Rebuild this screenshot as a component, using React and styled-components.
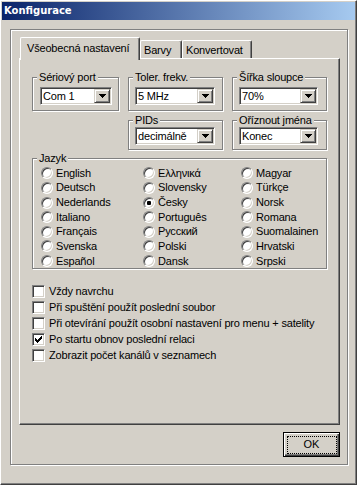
import React from 'react';
import styled, { createGlobalStyle } from 'styled-components';

const Global = createGlobalStyle`
  html, body { margin: 0; padding: 0; background: #D4D0C8; }
  * { box-sizing: border-box; }
`;

const Window = styled.div`
  width: 357px;
  height: 485px;
  background: #D4D0C8;
  border: 1px solid;
  border-color: #ffffff #404040 #404040 #ffffff;
  box-shadow: inset -1px -1px #808080;
  padding: 1px;
  display: flex;
  flex-direction: column;
  font-family: "Liberation Sans", Arial, sans-serif;
  font-size: 11px;
  letter-spacing: -0.18px;
  color: #000;
`;

const TitleBar = styled.div`
  height: 18px;
  display: flex;
  align-items: center;
  padding: 0 0 1px 2px;
  background: linear-gradient(to right, #0A246A, #A6CAF0);
  color: #fff;
  font-family: "DejaVu Sans", Verdana, sans-serif;
  font-weight: bold;
  font-size: 10px;
  letter-spacing: 0;
`;

const Frame = styled.div`
  margin: 9px 0 0 8px;
  width: 338px;
  height: 436px;
  border: 1px solid #808080;
  box-shadow: inset 1px 1px #fff, 1px 1px #fff;
  padding: 7px 0 0 8px;
  display: flex;
  flex-direction: column;
`;

const TabStrip = styled.div`
  height: 21px;
  display: flex;
  align-items: flex-start;
  padding-left: 1px;
  position: relative;
  z-index: 1;
`;

const Tab = styled.div`
  width: ${p => p.$w}px;
  height: ${p => (p.$active ? 23 : 18)}px;
  margin-top: ${p => (p.$active ? 0 : 3)}px;
  background: #D4D0C8;
  border-left: 1px solid #fff;
  border-top: 1px solid #fff;
  border-right: 1px solid #404040;
  box-shadow: inset -1px 0 #808080;
  border-top-left-radius: 2px;
  border-top-right-radius: 2px;
  padding: ${p => (p.$active ? '4px 0 0 6px' : '3px 0 0 3px')};
  line-height: 13px;
  white-space: nowrap;
`;

const Panel = styled.div`
  width: 321px;
  height: 367px;
  border: 1px solid;
  border-color: #fff #404040 #404040 #fff;
  box-shadow: inset -1px -1px #808080;
  padding: 18px 0 0 12px;
  display: flex;
  flex-direction: column;
`;

const GroupGrid = styled.div`
  display: grid;
  grid-template-columns: 87px 95px 95px;
  grid-template-rows: 34px 30px;
  column-gap: 9px;
  row-gap: 9px;
`;

const Group = styled.div`
  position: relative;
  grid-column: ${p => p.$col || 'auto'};
  width: ${p => (p.$w ? `${p.$w}px` : 'auto')};
  height: ${p => (p.$h ? `${p.$h}px` : 'auto')};
  margin-top: ${p => p.$mt || 0}px;
  border: 1px solid #808080;
  box-shadow: inset 1px 1px #fff, 1px 1px #fff;
  padding: ${p => p.$pt}px 0 0 ${p => p.$pl}px;
`;

const Legend = styled.span`
  position: absolute;
  top: -7px;
  left: 4px;
  padding: 0 2px;
  line-height: 13px;
  background: #D4D0C8;
  white-space: nowrap;
`;

const Combo = styled.div`
  width: ${p => p.$w}px;
  height: 18px;
  display: flex;
  align-items: center;
  background: #fff;
  border: 1px solid;
  border-color: #808080 #fff #fff #808080;
  box-shadow: inset 1px 1px #404040, inset -1px -1px #D4D0C8;
  padding: 1px 1px 1px 2px;
`;

const ComboText = styled.span`
  flex: 1;
  line-height: 14px;
  white-space: nowrap;
  overflow: hidden;
`;

const DropButton = styled.span`
  width: 16px;
  height: 14px;
  display: flex;
  align-items: center;
  justify-content: center;
  background: #D4D0C8;
  border: 1px solid;
  border-color: #D4D0C8 #404040 #404040 #D4D0C8;
  box-shadow: inset 1px 1px #fff, inset -1px -1px #808080;
`;

const RadioGrid = styled.div`
  display: grid;
  grid-template-columns: 102px 98px 1fr;
  grid-template-rows: repeat(7, 14.625px);
  grid-auto-flow: column;
`;

const RadioItem = styled.label`
  display: flex;
  align-items: center;
  gap: 3px;
  line-height: 13px;
  white-space: nowrap;
`;

const RadioCircle = styled.span`
  position: relative;
  width: 12px;
  height: 12px;
  flex: none;
  border-radius: 50%;
  background: #fff;
  border: 1px solid;
  border-color: #808080 #fff #fff #808080;
  box-shadow: inset 1px 1px #404040, inset -1px -1px #D4D0C8;
  &::after {
    content: '';
    display: ${p => (p.$checked ? 'block' : 'none')};
    position: absolute;
    left: 3px;
    top: 3px;
    width: 4px;
    height: 4px;
    border-radius: 1px;
    background: #000;
  }
`;

const CheckList = styled.div`
  margin-top: 14px;
  display: flex;
  flex-direction: column;
`;

const CheckRow = styled.label`
  height: 16px;
  display: flex;
  align-items: center;
  gap: 4px;
  line-height: 13px;
  white-space: nowrap;
`;

const CheckBox = styled.span`
  width: 13px;
  height: 13px;
  flex: none;
  display: flex;
  align-items: center;
  justify-content: center;
  background: #fff;
  border: 1px solid;
  border-color: #808080 #fff #fff #808080;
  box-shadow: inset 1px 1px #404040, inset -1px -1px #D4D0C8;
`;

const ButtonRow = styled.div`
  width: 321px;
  margin-top: 7px;
  display: flex;
  justify-content: flex-end;
`;

const OkButton = styled.button`
  position: relative;
  width: 57px;
  height: 25px;
  padding: 0;
  background: #D4D0C8;
  border: 1px solid #000;
  box-shadow: inset 1px 1px #fff, inset -1px -1px #404040, inset -2px -2px #808080;
  font: inherit;
  color: #000;
  line-height: 13px;
  &::after {
    content: '';
    position: absolute;
    left: 3px;
    top: 3px;
    right: 2px;
    bottom: 2px;
    border: 1px dotted #000;
  }
`;

const Arrow = () => (
  <svg width="7" height="4" viewBox="0 0 7 4" shapeRendering="crispEdges">
    <rect x="0" y="0" width="7" height="1" fill="#000" />
    <rect x="1" y="1" width="5" height="1" fill="#000" />
    <rect x="2" y="2" width="3" height="1" fill="#000" />
    <rect x="3" y="3" width="1" height="1" fill="#000" />
  </svg>
);

const Tick = () => (
  <svg width="7" height="7" viewBox="0 0 7 7" shapeRendering="crispEdges">
    <rect x="6" y="0" width="1" height="1" fill="#000" />
    <rect x="5" y="1" width="2" height="1" fill="#000" />
    <rect x="0" y="2" width="1" height="1" fill="#000" />
    <rect x="4" y="2" width="3" height="1" fill="#000" />
    <rect x="0" y="3" width="2" height="1" fill="#000" />
    <rect x="3" y="3" width="3" height="1" fill="#000" />
    <rect x="0" y="4" width="5" height="1" fill="#000" />
    <rect x="1" y="5" width="3" height="1" fill="#000" />
    <rect x="2" y="6" width="1" height="1" fill="#000" />
  </svg>
);

const Select = ({ w, value }) => (
  <Combo $w={w}>
    <ComboText>{value}</ComboText>
    <DropButton><Arrow /></DropButton>
  </Combo>
);

const languages = [
  'English', 'Deutsch', 'Nederlands', 'Italiano', 'Français', 'Svenska', 'Español',
  'Ελληνικά', 'Slovensky', 'Česky', 'Português', 'Русский', 'Polski', 'Dansk',
  'Magyar', 'Türkçe', 'Norsk', 'Romana', 'Suomalainen', 'Hrvatski', 'Srpski',
];

const options = [
  { label: 'Vždy navrchu', checked: false },
  { label: 'Při spuštění použít poslední soubor', checked: false },
  { label: 'Při otevírání použít osobní nastavení pro menu + satelity', checked: false },
  { label: 'Po startu obnov poslední relaci', checked: true },
  { label: 'Zobrazit počet kanálů v seznamech', checked: false },
];

export default function App() {
  return (
    <>
      <Global />
      <Window>
        <TitleBar>Konfigurace</TitleBar>
        <Frame>
          <TabStrip>
            <Tab $active $w={120}>Všeobecná nastavení</Tab>
            <Tab $w={42}>Barvy</Tab>
            <Tab $w={70}>Konvertovat</Tab>
          </TabStrip>
          <Panel>
            <GroupGrid>
              <Group $pt={9} $pl={7}>
                <Legend>Sériový port</Legend>
                <Select w={72} value="Com 1" />
              </Group>
              <Group $pt={9} $pl={6}>
                <Legend>Toler. frekv.</Legend>
                <Select w={80} value="5 MHz" />
              </Group>
              <Group $pt={9} $pl={6}>
                <Legend>Šířka sloupce</Legend>
                <Select w={79} value="70%" />
              </Group>
              <Group $col={2} $pt={6} $pl={6}>
                <Legend>PIDs</Legend>
                <Select w={80} value="decimálně" />
              </Group>
              <Group $col={3} $pt={6} $pl={6}>
                <Legend>Oříznout jména</Legend>
                <Select w={79} value="Konec" />
              </Group>
            </GroupGrid>
            <Group $w={295} $h={111} $mt={8} $pt={7} $pl={8}>
              <Legend>Jazyk</Legend>
              <RadioGrid>
                {languages.map(l => (
                  <RadioItem key={l}>
                    <RadioCircle $checked={l === 'Česky'} />
                    {l}
                  </RadioItem>
                ))}
              </RadioGrid>
            </Group>
            <CheckList>
              {options.map(o => (
                <CheckRow key={o.label}>
                  <CheckBox>{o.checked && <Tick />}</CheckBox>
                  {o.label}
                </CheckRow>
              ))}
            </CheckList>
          </Panel>
          <ButtonRow>
            <OkButton>OK</OkButton>
          </ButtonRow>
        </Frame>
      </Window>
    </>
  );
}
